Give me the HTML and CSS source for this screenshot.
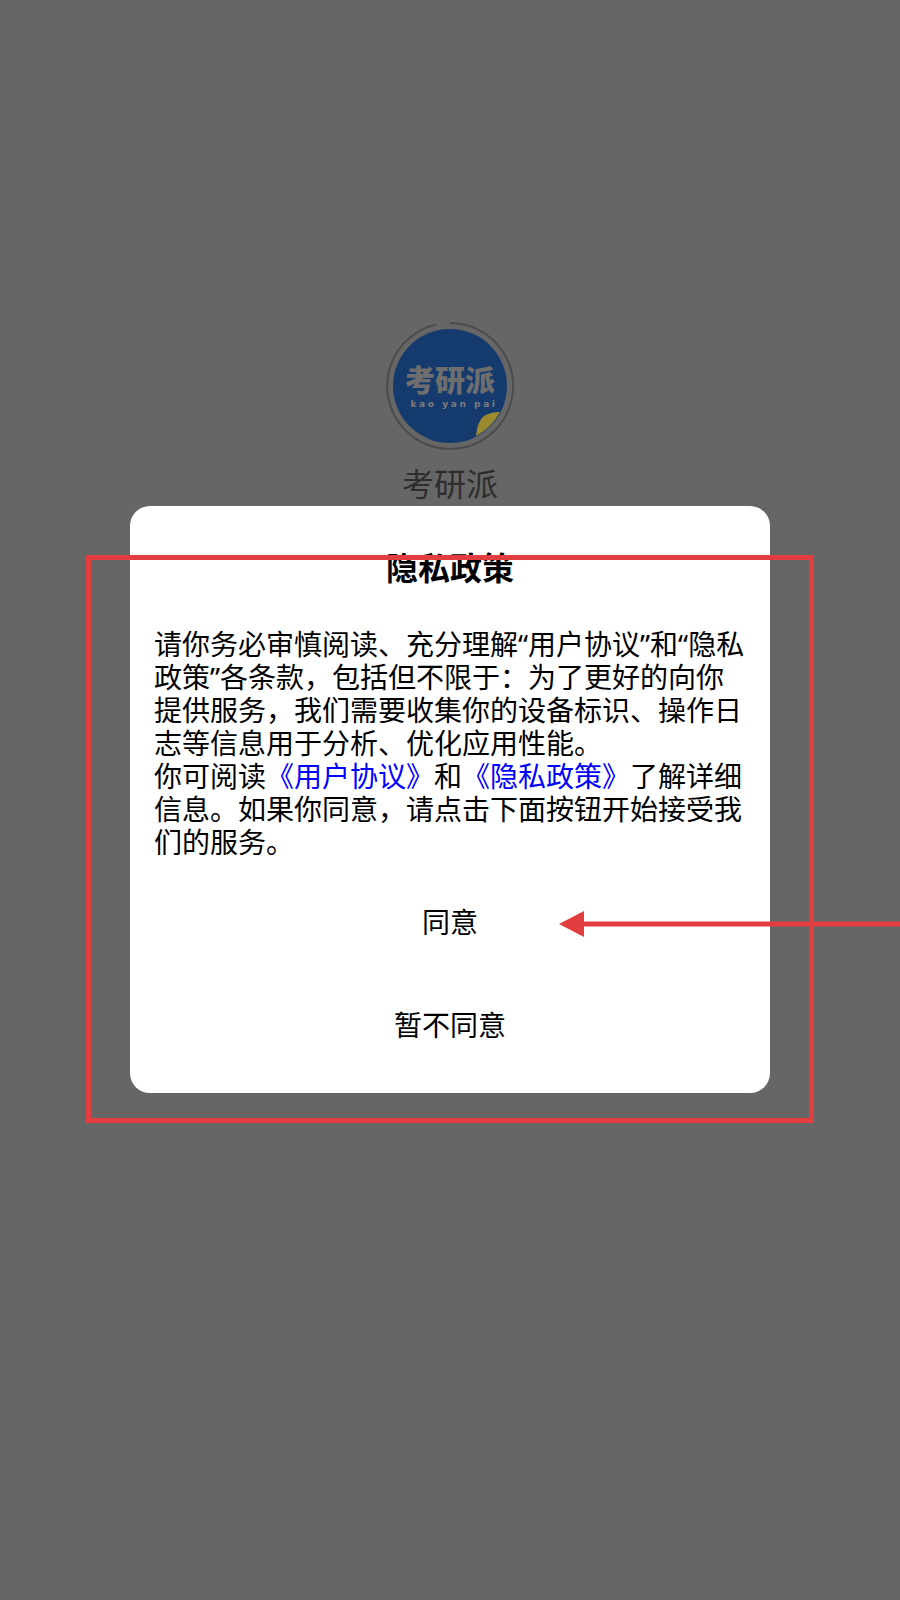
FILE: index.html
```html
<!DOCTYPE html>
<html lang="zh-CN">
<head>
<meta charset="utf-8">
<title>考研派</title>
<link rel="stylesheet" href="styles.css">
</head>
<body>
<main class="splash">
  <div class="logo">
    <svg class="logo-art" viewBox="0 0 130 130" width="130" height="130" aria-hidden="true">
      <path class="ring" d="M 51.5 3.5 A 63 63 0 1 0 65 2"/>
      <circle class="disc" cx="65" cy="65" r="57"/>
      <path class="leaf" d="M91 115 C92 105 95 97 100 94.5 C104 92 110 91 115 91 A57 57 0 0 1 91 115 Z"/>
    </svg>
    <div class="logo-type">
      <span class="logo-cn">考研派</span>
      <span class="logo-en">kao yan pai</span>
    </div>
  </div>
  <h1 class="app-name">考研派</h1>
</main>

<div class="overlay">
  <section class="dialog">
    <h2 class="dialog-title">隐私政策</h2>
    <p class="dialog-body">请你务必审慎阅读、充分理解“用户协议”和“隐私政策”各条款，包括但不限于：为了更好的向你提供服务，我们需要收集你的设备标识、操作日志等信息用于分析、优化应用性能。<br>你可阅读<a class="link">《用户协议》</a>和<a class="link">《隐私政策》</a>了解详细信息。如果你同意，请点击下面按钮开始接受我们的服务。</p>
    <div class="actions">
      <button class="action">同意</button>
      <button class="action">暂不同意</button>
    </div>
  </section>
</div>

<div class="annot-box"></div>
<svg class="annot-arrow" viewBox="0 0 341 28" width="341" height="28" aria-hidden="true">
  <path d="M0 14 L25 1 V11.5 H341 V16.5 H25 V27 Z"/>
</svg>
</body>
</html>
```
FILE: styles.css
```css
* { box-sizing: border-box; }
html, body { margin: 0; padding: 0; }
body {
  width: 900px;
  height: 1600px;
  background: #666666;
  font-family: "Noto Sans", "Noto Sans CJK SC", sans-serif;
  position: relative;
  overflow: hidden;
}
.splash {
  display: flex;
  flex-direction: column;
  align-items: center;
  padding-top: 321px;
}
.logo { position: relative; width: 130px; height: 130px; }
.logo-art { display: block; }
.ring { fill: none; stroke: #4c4c4c; stroke-width: 2; }
.disc { fill: #153b6e; }
.leaf { fill: #9c8b2e; }
.logo-type {
  position: absolute;
  left: 0; right: 0; top: 41px;
  display: flex;
  flex-direction: column;
  align-items: center;
  color: #6e6e6e;
}
.logo-cn { font-size: 30px; font-weight: 900; line-height: 36px; }
.logo-en {
  font-family: "DejaVu Sans", sans-serif;
  font-size: 9px;
  font-weight: 700;
  letter-spacing: 2.6px;
  line-height: 12px;
  margin-left: 8px;
  color: #7d7d7d;
}
.app-name {
  margin: 10px 0 0;
  font-size: 32px;
  font-weight: 400;
  line-height: 46px;
  color: #2d2d2d;
}
.overlay {
  position: absolute;
  inset: 0;
  padding-bottom: 1px;
  display: flex;
  align-items: center;
  justify-content: center;
}
.dialog {
  width: 640px;
  height: 587px;
  background: #fff;
  border-radius: 20px;
  padding: 38px 24px 0;
  color: #000;
}
.dialog-title {
  margin: 0;
  font-size: 32px;
  font-weight: 700;
  line-height: 48px;
  text-align: center;
}
.dialog-body {
  margin: 36px 0 0;
  font-size: 28px;
  line-height: 33px;
}
.link { color: #0000ff; }
.actions {
  display: flex;
  flex-direction: column;
  margin-top: 10px;
}
.action {
  height: 103px;
  border: 0;
  background: none;
  font: inherit;
  font-size: 28px;
  color: #000;
}
.annot-box {
  position: absolute;
  left: 86px;
  top: 555px;
  width: 728px;
  height: 568px;
  border: 5px solid #e23d3f;
}
.annot-arrow {
  position: absolute;
  left: 559px;
  top: 910px;
  fill: #e23d3f;
}
```
